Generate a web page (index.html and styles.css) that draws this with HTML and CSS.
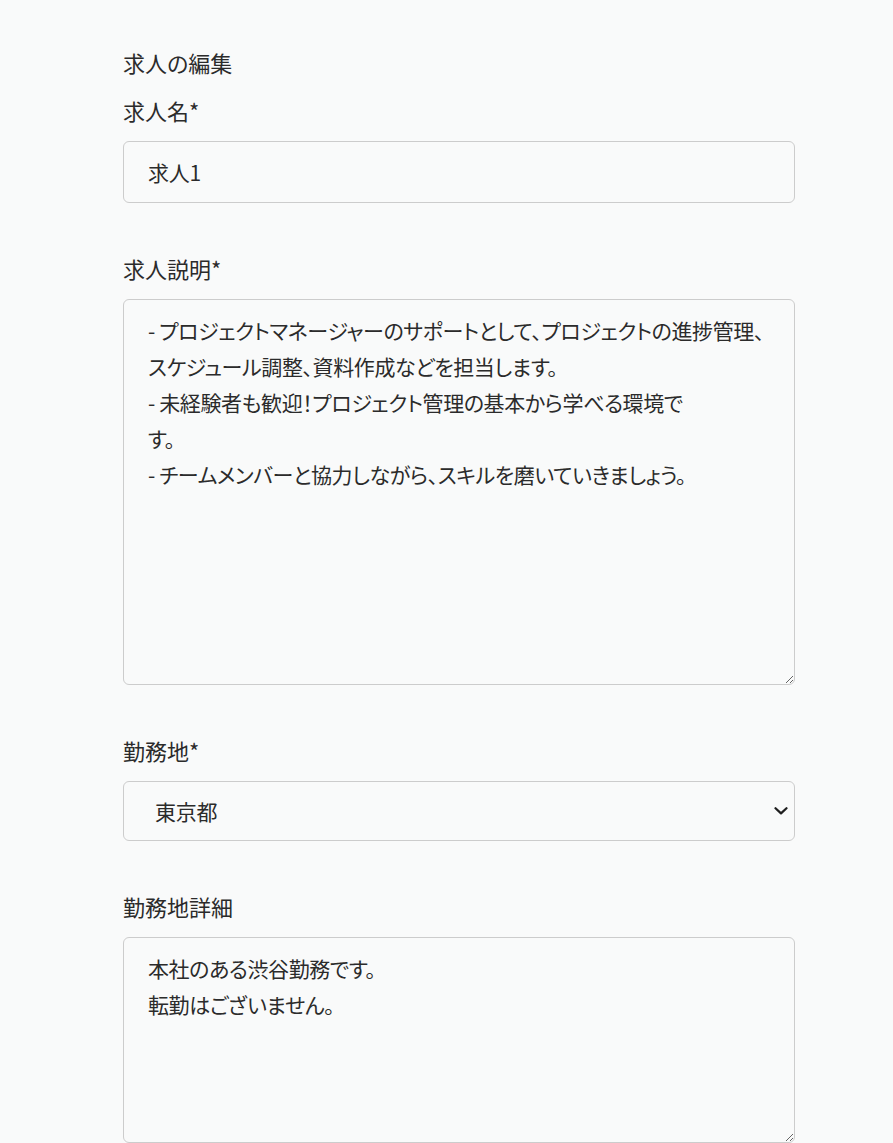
FILE: index.html
```html
<!DOCTYPE html>
<html lang="ja">
<head>
<meta charset="utf-8">
<title>求人の編集</title>
<link rel="stylesheet" href="styles.css">
</head>
<body>
<main class="page">
  <h1 class="title">求人の編集</h1>
  <form class="form">
    <div class="field">
      <label class="label" for="name">求人名*</label>
      <input class="control" id="name" type="text" value="求人1">
    </div>
    <div class="field">
      <label class="label" for="desc">求人説明*</label>
      <textarea class="control area" id="desc" rows="10">- プロジェクトマネージャーのサポートとして、プロジェクトの進捗管理、
スケジュール調整、資料作成などを担当します。
- 未経験者も歓迎！プロジェクト管理の基本から学べる環境で
す。
- チームメンバーと協力しながら、スキルを磨いていきましょう。</textarea>
    </div>
    <div class="field">
      <label class="label" for="loc">勤務地*</label>
      <div class="select-wrap">
        <select class="control select" id="loc">
          <option selected>東京都</option>
          <option>大阪府</option>
        </select>
        <svg class="chevron" width="14" height="8" viewBox="0 0 14 8" aria-hidden="true">
          <path d="M1.5 1.2 L7 6.4 L12.5 1.2" fill="none" stroke="#1f1f1f" stroke-width="2.2" stroke-linecap="round" stroke-linejoin="round"/>
        </svg>
      </div>
    </div>
    <div class="field">
      <label class="label" for="locd">勤務地詳細</label>
      <textarea class="control area" id="locd" rows="5">本社のある渋谷勤務です。
転勤はございません。</textarea>
    </div>
  </form>
</main>
</body>
</html>
```

FILE: styles.css
```css
html, body {
  margin: 0;
  padding: 0;
  background: #f9fafa;
}
body {
  padding: 8px;
  font-family: "Noto Sans CJK JP", "Noto Sans", sans-serif;
  color: #2b2b2b;
}
.page {
  width: 672px;
  margin-left: 115px;
  padding-top: 38px;
}
.title {
  margin: 0 0 17px;
  font-size: 22px;
  font-weight: 400;
  line-height: 33px;
  font-feature-settings: "palt";
}
.form {
  display: flex;
  flex-direction: column;
  gap: 51px;
}
.field {
  display: flex;
  flex-direction: column;
  gap: 12px;
}
.label {
  font-size: 22px;
  line-height: 29px;
  padding-bottom: 4px;
  font-feature-settings: "palt";
}
.control {
  box-sizing: border-box;
  width: 100%;
  margin: 0;
  padding: 12px 24px;
  border: 1px solid #cccccc;
  border-radius: 6px;
  background: transparent;
  font-family: "Noto Sans CJK JP", "Noto Sans", sans-serif;
  font-size: 21px;
  line-height: 36px;
  color: #2b2b2b;
  font-feature-settings: "palt";
  letter-spacing: -0.2px;
}
.area {
  display: block;
  resize: vertical;
  white-space: pre-wrap;
  letter-spacing: -0.4px;
}
.select-wrap {
  position: relative;
}
.select {
  display: block;
  height: 60px;
  padding: 0 48px 0 31px;
  -webkit-appearance: none;
  appearance: none;
}
.chevron {
  position: absolute;
  right: 7px;
  top: 26px;
  pointer-events: none;
}
```
